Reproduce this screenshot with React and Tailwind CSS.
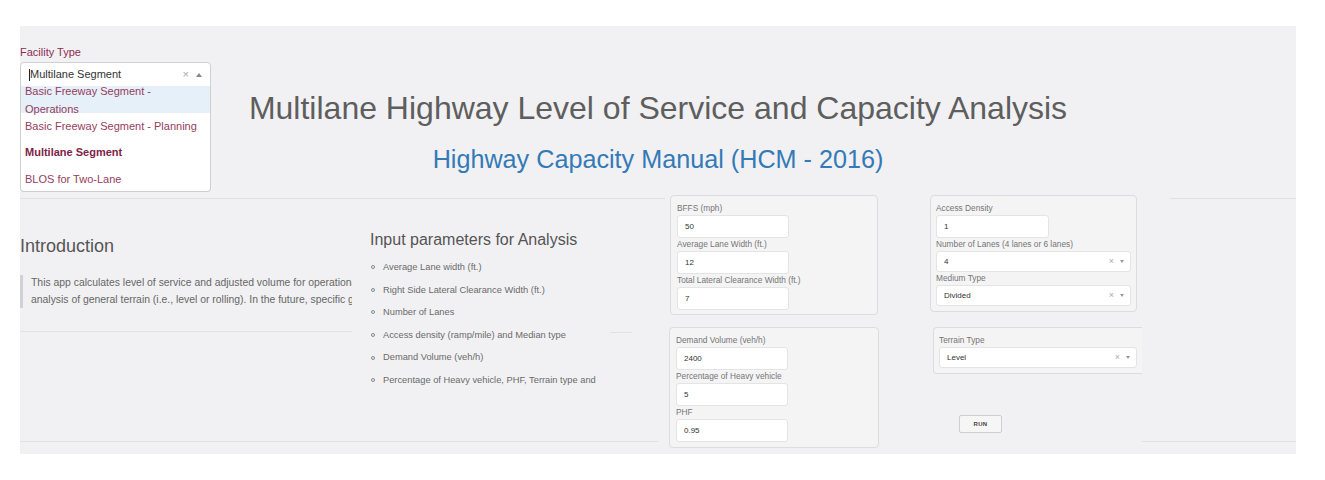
import React from "react";

const Label = ({ children }) => (
  <div className="text-[8.3px] leading-[12px] text-[#757575] whitespace-nowrap">{children}</div>
);

const Input = ({ value, w = "w-[112px]" }) => (
  <div className={`${w} mt-[1px] h-[23px] bg-white border border-[#e4e4e6] rounded-[3px] pl-[7px] flex items-center text-[8px] text-[#333]`}>
    {value}
  </div>
);

const Select = ({ value, w = "w-[195px]" }) => (
  <div className={`${w} mt-[1px] h-[21px] bg-white border border-[#e4e4e6] rounded-[3px] pl-[7px] pr-[6px] flex items-center text-[8px] text-[#333]`}>
    <span className="flex-1">{value}</span>
    <span className="text-[9px] leading-none text-[#aaa]">×</span>
    <span className="ml-[6px] w-0 h-0 border-x-[2.5px] border-x-transparent border-t-[3px] border-t-[#999]" />
  </div>
);

const Hr = ({ className = "" }) => <div className={`h-px bg-[#e1e1e3] ${className}`} />;

export default function App() {
  const items = [
    "Average Lane width (ft.)",
    "Right Side Lateral Clearance Width (ft.)",
    "Number of Lanes",
    "Access density (ramp/mile) and Median type",
    "Demand Volume (veh/h)",
    "Percentage of Heavy vehicle, PHF, Terrain type and",
  ];
  return (
    <div className="w-[1325px] h-[480px] bg-white pt-[26px] pl-[20px] font-['Liberation_Sans',Arial,sans-serif]">
      <div className="w-[1276px] h-[428px] bg-[#f1f1f3] flex flex-col overflow-hidden">
        {/* Header */}
        <div className="h-[169px] shrink-0 flex flex-col pt-[20px] relative z-10">
          <div className="text-[11px] leading-[13px] text-[#8e2d52]">Facility Type</div>
          <div className="relative mt-[3px] w-[191px] h-[25px] bg-white border border-[#cfcfcf] rounded-t-[4px] flex items-center pl-[8px] pr-[8px]">
            <span className="w-px h-[12px] bg-[#222]" />
            <span className="flex-1 text-[11px] text-[#333]">Multilane Segment</span>
            <span className="text-[11px] leading-none text-[#aaa]">×</span>
            <span className="ml-[7px] w-0 h-0 border-x-[3px] border-x-transparent border-b-[4px] border-b-[#888]" />
            <div className="absolute left-[-1px] top-full w-[191px] h-[106px] bg-white border border-[#cfcfcf] border-t-0 rounded-b-[4px] overflow-hidden text-[11px] text-[#953d60]">
              <div className="h-[27px] bg-[#e6f0f9] pl-[4px]">
                <div className="relative top-[-3px] leading-[17.6px]">
                  Basic Freeway Segment -<br />Operations
                </div>
              </div>
              <div className="h-[26.3px] leading-[26.3px] pl-[4px]">Basic Freeway Segment - Planning</div>
              <div className="h-[26.3px] leading-[26.3px] pl-[4px] font-bold text-[#7e2347]">Multilane Segment</div>
              <div className="h-[26.3px] leading-[26.3px] pl-[4px]">BLOS for Two-Lane</div>
            </div>
          </div>
          <h1 className="mt-[1px] text-center text-[32px] leading-[40px] text-[#5e5e5e]">
            Multilane Highway Level of Service and Capacity Analysis
          </h1>
          <h2 className="mt-[16px] text-center text-[25.2px] leading-[30px] text-[#337ab7]">
            Highway Capacity Manual (HCM - 2016)
          </h2>
        </div>

        {/* Body */}
        <div className="flex flex-1">
          {/* Left block */}
          <div className="w-[645px] flex flex-col">
            <Hr className="mt-[3px] w-[645px]" />
            <div className="flex h-[242px]">
              <div className="w-[332px] overflow-hidden pt-[36px]">
                <h3 className="text-[18px] leading-[22px] text-[#555]">Introduction</h3>
                <div className="mt-[18px] border-l-[3px] border-[#d2d2d4] pl-[8px] text-[10.4px] leading-[16.7px] text-[#666] whitespace-nowrap">
                  <div>This app calculates level of service and adjusted volume for operational</div>
                  <div>analysis of general terrain (i.e., level or rolling). In the future, specific grade</div>
                </div>
                <Hr className="mt-[23px] w-[332px]" />
              </div>
              <div className="w-[313px] relative pt-[31px] pl-[18px]">
                <h4 className="text-[16px] leading-[20px] text-[#555]">Input parameters for Analysis</h4>
                <ul className="mt-[6px]">
                  {items.map((t) => (
                    <li key={t} className="flex items-center leading-[22.6px] text-[9.3px] text-[#6a6a6a] whitespace-nowrap">
                      <span className="w-[4px] h-[4px] rounded-full border border-[#888] ml-[1px] mr-[8px]" />
                      {t}
                    </li>
                  ))}
                </ul>
                <Hr className="absolute top-[133px] left-[258px] w-[22px]" />
              </div>
            </div>
            <Hr className="w-[638px]" />
          </div>

          {/* Column C */}
          <div className="w-[225px] flex flex-col">
            <div className="ml-[5px] w-[208px] border border-[#dcdcde] rounded-[4px] bg-[#f4f4f5] pt-[6px] pl-[6px] pb-[4px]">
              <Label>BFFS (mph)</Label>
              <Input value="50" />
              <Label>Average Lane Width (ft.)</Label>
              <Input value="12" />
              <Label>Total Lateral Clearance Width (ft.)</Label>
              <Input value="7" />
            </div>
            <div className="mt-[12px] ml-[4px] w-[210px] border border-[#dcdcde] rounded-[4px] bg-[#f4f4f5] pt-[6px] pl-[6px] pb-[5px]">
              <Label>Demand Volume (veh/h)</Label>
              <Input value="2400" />
              <Label>Percentage of Heavy vehicle</Label>
              <Input value="5" />
              <Label>PHF</Label>
              <Input value="0.95" />
            </div>
          </div>

          {/* Column D */}
          <div className="w-[252px] flex flex-col">
            <div className="ml-[40px] w-[207px] border border-[#dcdcde] rounded-[4px] bg-[#f4f4f5] pt-[6px] pl-[5px] pb-[5px]">
              <Label>Access Density</Label>
              <Input value="1" w="w-[113px]" />
              <Label>Number of Lanes (4 lanes or 6 lanes)</Label>
              <Select value="4" />
              <Label>Medium Type</Label>
              <Select value="Divided" />
            </div>
            <div className="mt-[15px] ml-[43px] w-[209px] border border-r-0 border-[#dcdcde] rounded-l-[4px] bg-[#f4f4f5] pt-[6px] pl-[5px] pb-[5px]">
              <Label>Terrain Type</Label>
              <Select value="Level" w="w-[198px]" />
            </div>
            <button className="mt-[41px] ml-[69px] w-[43px] h-[18px] bg-[#f6f6f7] border border-[#cfcfd1] rounded-[2px] text-[6px] font-semibold tracking-[0.3px] text-[#444] flex items-center justify-center">
              RUN
            </button>
          </div>

          {/* Right */}
          <div className="w-[154px] flex flex-col">
            <Hr className="mt-[3px] ml-[28px] w-[126px]" />
            <Hr className="mt-[242px] w-[154px]" />
          </div>
        </div>
      </div>
    </div>
  );
}
